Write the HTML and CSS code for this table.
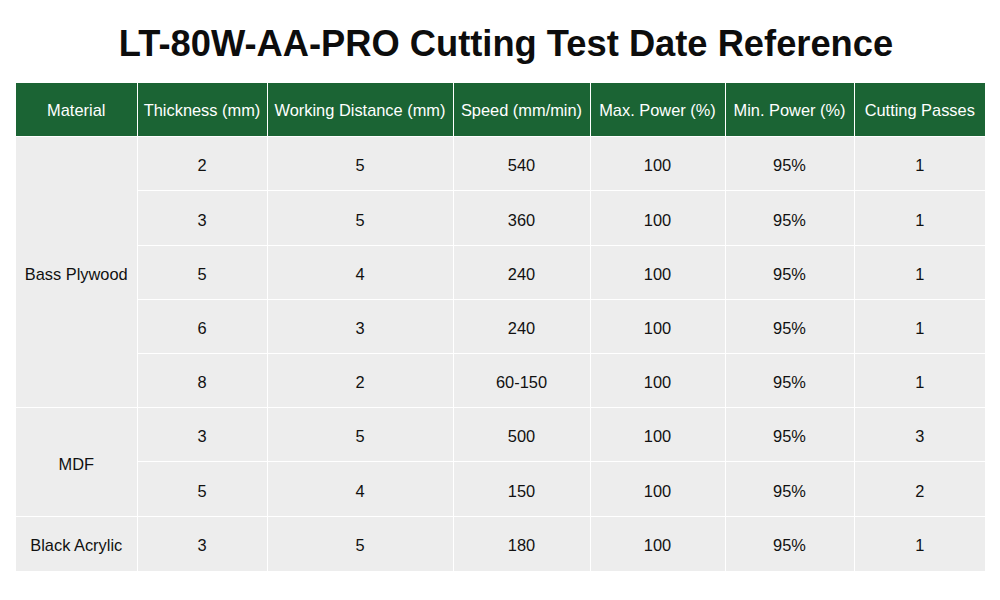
FILE: index.html
```html
<!DOCTYPE html>
<html lang="en">
<head>
<meta charset="utf-8">
<title>LT-80W-AA-PRO Cutting Test Date Reference</title>
<link rel="stylesheet" href="styles.css">
</head>
<body>
<main class="page">
  <h1 class="title">LT-80W-AA-PRO Cutting Test Date Reference</h1>
  <table class="data">
    <colgroup>
      <col class="c-mat"><col class="c-thk"><col class="c-wd"><col class="c-spd"><col class="c-max"><col class="c-min"><col class="c-pass">
    </colgroup>
    <thead>
      <tr class="head">
        <th>Material</th>
        <th>Thickness (mm)</th>
        <th>Working Distance (mm)</th>
        <th>Speed (mm/min)</th>
        <th>Max. Power (%)</th>
        <th>Min. Power (%)</th>
        <th>Cutting Passes</th>
      </tr>
    </thead>
    <tbody>
      <tr class="r54"><td rowspan="5">Bass Plywood</td><td>2</td><td>5</td><td>540</td><td>100</td><td>95%</td><td>1</td></tr>
      <tr class="r55"><td>3</td><td>5</td><td>360</td><td>100</td><td>95%</td><td>1</td></tr>
      <tr class="r54"><td>5</td><td>4</td><td>240</td><td>100</td><td>95%</td><td>1</td></tr>
      <tr class="r54"><td>6</td><td>3</td><td>240</td><td>100</td><td>95%</td><td>1</td></tr>
      <tr class="r54"><td>8</td><td>2</td><td>60-150</td><td>100</td><td>95%</td><td>1</td></tr>
      <tr class="r54"><td rowspan="2">MDF</td><td>3</td><td>5</td><td>500</td><td>100</td><td>95%</td><td>3</td></tr>
      <tr class="r55"><td>5</td><td>4</td><td>150</td><td>100</td><td>95%</td><td>2</td></tr>
      <tr class="r54"><td>Black Acrylic</td><td>3</td><td>5</td><td>180</td><td>100</td><td>95%</td><td>1</td></tr>
    </tbody>
  </table>
</main>
</body>
</html>
```

FILE: styles.css
```css
html, body {
  margin: 0;
  padding: 0;
  background: #ffffff;
}

.page {
  width: 1000px;
  height: 600px;
  padding: 26px 0 0 16px;
  box-sizing: border-box;
  font-family: "Liberation Sans", Arial, sans-serif;
  color: #111111;
}

.title {
  margin: 0 0 21px -16px;
  padding-left: 12px;
  width: 1000px;
  box-sizing: border-box;
  text-align: center;
  font-size: 36.3px;
  line-height: 36px;
  font-weight: bold;
  color: #0d0d0d;
}

.data {
  width: 969px;
  table-layout: fixed;
  border-collapse: collapse;
  font-size: 16.4px;
}

.c-mat { width: 121px; }
.c-thk { width: 130px; }
.c-wd { width: 186px; }
.c-spd { width: 137px; }
.c-max { width: 135px; }
.c-min { width: 129px; }
.c-pass { width: 131px; }

.data th,
.data td {
  padding: 0;
  text-align: center;
  vertical-align: middle;
  border: 1px solid #ffffff;
  white-space: nowrap;
}

.data tr > :first-child { border-left: 0; }
.data tr > :last-child { border-right: 0; }

.head th {
  background: #1b6434;
  color: #ffffff;
  font-weight: normal;
  height: 51px;
  padding-top: 2px;
  border-top: 0;
}

.data td {
  background: #ededed;
  padding-top: 4px;
}

.r54 { height: 54px; }
.r55 { height: 55px; }

.data tbody tr:last-child td { border-bottom: 0; }
```
